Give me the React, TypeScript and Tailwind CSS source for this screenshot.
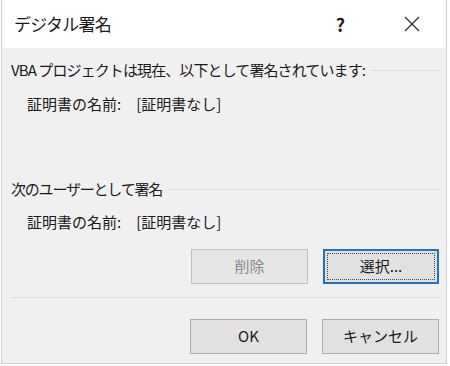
import React from "react";

const font = { fontFamily: '"Noto Sans CJK JP", "Noto Sans", sans-serif' };

function Btn({ children, disabled, focused }: { children: React.ReactNode; disabled?: boolean; focused?: boolean }) {
  if (focused) {
    return (
      <div className="w-[116px] h-[35px] border-2 border-[#1a73c8] bg-[#e1e1e1] p-[2px]">
        <div className="w-full h-full border border-dotted border-[#444] flex items-center justify-center text-[15px] text-[#1a1a1a]">
          {children}
        </div>
      </div>
    );
  }
  return (
    <div
      className={`w-[117px] h-[35px] border flex items-center justify-center text-[15px] ${
        disabled ? "bg-[#e6e6e6] text-[#8a8a8a] border-[#bfbfbf]" : "bg-[#e1e1e1] text-[#1a1a1a] border-[#adadad]"
      }`}
    >
      {children}
    </div>
  );
}

function CertLine() {
  return (
    <div className="ml-[16px] text-[15px] text-[#1a1a1a] flex h-[16px] items-center">
      <span>証明書の名前:</span>
      <span className="ml-[15px]">[証明書なし]</span>
    </div>
  );
}

export default function App() {
  return (
    <div className="w-[450px] h-[366px] bg-white" style={font}>
      <div className="w-[446px] h-[364px] ml-[1px] border border-t-0 border-[#d0d0d0] flex flex-col">
        <div className="h-[48px] bg-white flex items-center pl-[12px] pr-[20px] shrink-0">
          <span className="text-[17px] text-[#1a1a1a] flex-1 tracking-[-0.8px]">デジタル署名</span>
          <span className="text-[18px] text-[#222] mr-[59px] font-semibold">?</span>
          <svg width="16" height="16" viewBox="0 0 16 16" className="mr-[6px]">
            <path d="M1 1 L15 15 M15 1 L1 15" stroke="#333" strokeWidth="1.4" />
          </svg>
        </div>
        <div className="flex-1 bg-[#f0f0f0] flex flex-col pl-[9px] pr-[5px]">
          <div className="flex items-center mt-[14px] h-[16px]">
            <span className="text-[15px] text-[#1a1a1a] whitespace-nowrap tracking-[-0.9px]">VBA プロジェクトは現在、以下として署名されています:</span>
            <div className="flex-1 h-[1px] bg-[#dcdcdc] ml-[6px]"></div>
          </div>
          <div className="mt-[18px]">
            <CertLine />
          </div>
          <div className="flex items-center mt-[69px] h-[16px]">
            <span className="text-[15px] text-[#1a1a1a] whitespace-nowrap tracking-[-1.2px]">次のユーザーとして署名</span>
            <div className="flex-1 h-[1px] bg-[#dcdcdc] ml-[6px]"></div>
          </div>
          <div className="mt-[17px]">
            <CertLine />
          </div>
          <div className="flex justify-end gap-[15px] mt-[19px] pr-[2px]">
            <Btn disabled>削除</Btn>
            <Btn focused>選択...</Btn>
          </div>
          <div className="h-[1px] bg-[#dcdcdc] mt-[13px] mr-[1px]"></div>
          <div className="flex justify-end gap-[15px] mt-[21px] pr-[2px]">
            <Btn>OK</Btn>
            <Btn>キャンセル</Btn>
          </div>
        </div>
      </div>
    </div>
  );
}
